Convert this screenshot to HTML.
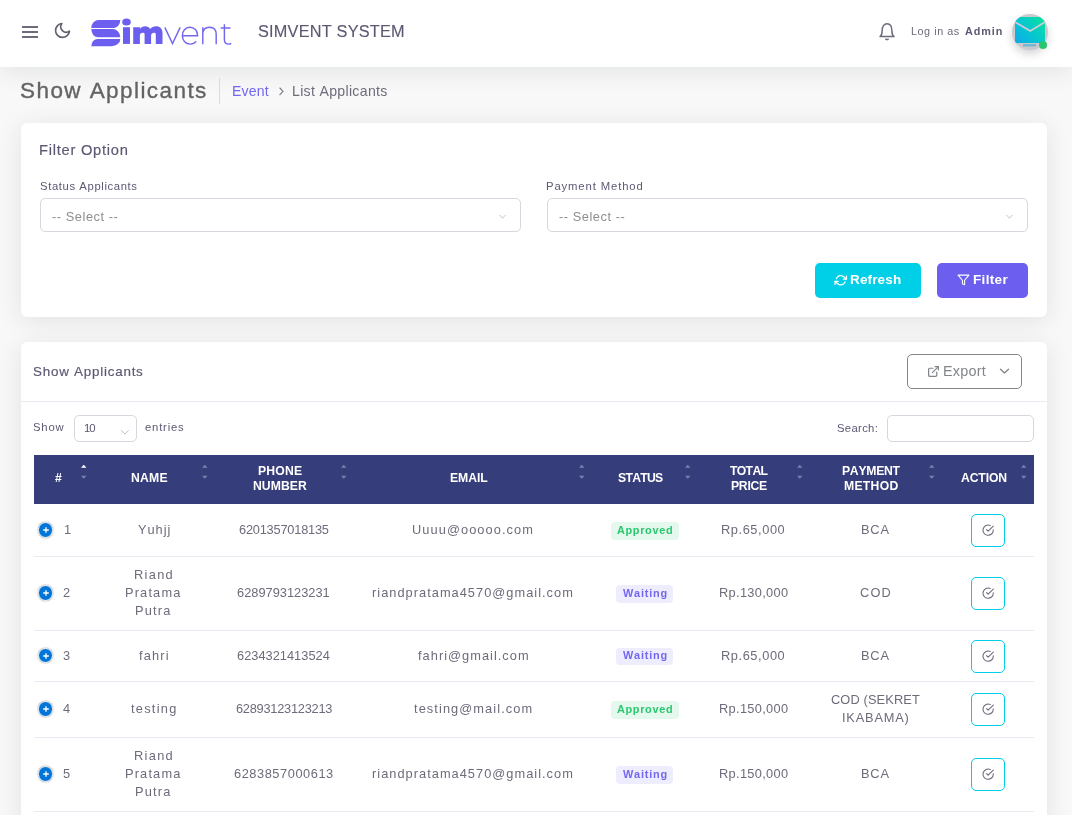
<!DOCTYPE html>
<html><head><meta charset="utf-8"><title>Show Applicants</title>
<style>
html,body{margin:0;padding:0}
body{width:1072px;height:815px;overflow:hidden;position:relative;background:#f8f8f8;font-family:"Liberation Sans",sans-serif;font-kerning:none;font-variant-ligatures:none}
.t{position:absolute;white-space:nowrap;will-change:transform}
.b{position:absolute}
</style></head><body>
<div class="b" style="left:0px;top:0px;width:1072px;height:67px;background:#fff;box-shadow:0 4px 24px 0 rgba(34,41,47,.10)"></div>
<div class="b" style="left:22px;top:26px;width:16px;height:2px;background:#6e6b7b"></div>
<div class="b" style="left:22px;top:31px;width:16px;height:2px;background:#6e6b7b"></div>
<div class="b" style="left:22px;top:36px;width:16px;height:2px;background:#6e6b7b"></div>
<svg class="b" style="left:54px;top:22px" width="17" height="17" viewBox="1 1 22 22"><path d="M21 12.79A9 9 0 1 1 11.21 3 7 7 0 0 0 21 12.79z" fill="none" stroke="#625f6e" stroke-width="2.1" stroke-linecap="round" stroke-linejoin="round"/></svg>
<svg class="b" style="left:88px;top:16px" width="80" height="34" viewBox="0 0 80 34"><g fill="#6c5fef"><path d="M3.3 11.9 A7.5 7.9 0 0 1 10.8 4 L32.3 4 A6.4 7.9 0 0 1 25.9 11.9 Z"/><path d="M3.3 13.1 L24.6 13.1 A7.7 8.2 0 0 1 32.3 21.3 L10 21.3 A6.7 8.2 0 0 1 3.3 13.1 Z"/><path d="M3.3 30.2 A6.3 7.3 0 0 1 9.6 22.9 L32.3 22.9 A8.5 7.3 0 0 1 23.8 30.2 Z"/><ellipse cx="38.5" cy="5.9" rx="4.3" ry="3.5"/><rect x="35" y="11.2" width="7" height="16.7"/><path d="M45.2 27.9 L45.2 11.2 L51.9 11.2 L51.9 13 C53 11 55 10.2 57.2 10.2 C59.6 10.2 61.3 11.3 62.3 13 C63.5 11.2 65.5 10.2 68 10.2 C72 10.2 74.5 12.8 74.5 17 L74.5 27.9 L67.8 27.9 L67.8 18.5 C67.8 17.3 67.3 16.7 66 16.7 C64.5 16.7 63.1 17.5 63.1 19.5 L63.1 27.9 L56.6 27.9 L56.6 18.5 C56.6 17.3 56.1 16.7 54.8 16.7 C53.3 16.7 51.9 17.5 51.9 19.5 L51.9 27.9 Z"/></g></svg>
<svg class="b" style="left:160px;top:18px" width="76" height="30" viewBox="0 0 76 30"><g fill="none" stroke="#6c5fef" stroke-width="1.45" stroke-linejoin="miter" opacity=".95"><path d="M4.8 9.4 L12.5 25.6 L20.2 9.4"/><path d="M22.6 17.8 L37.6 17.8 C37.6 12.6 34.4 9.3 29.9 9.3 C25.3 9.3 22.4 12.9 22.4 17.7 C22.4 22.6 25.6 26.1 30.2 26.1 C32.8 26.1 34.8 25.1 36.2 23.4"/><path d="M42.8 9.2 L42.8 26.2 M42.8 16.5 C42.8 11.8 45.5 9.3 49.5 9.3 C53.5 9.3 56.2 11.6 56.2 16.5 L56.2 26.2"/><path d="M64.4 6.2 L64.4 21.5 C64.4 24.6 66 26.1 68.6 26.1 C69.6 26.1 70.5 25.8 71.2 25.3 M60.7 10 L70.5 10"/></g></svg>
<div class="t" style="left:258.26px;top:21.60px;font-size:16.3px;line-height:18px;font-weight:400;color:#5e5873;letter-spacing:0.213px;-webkit-text-stroke:0.15px currentColor;">SIMVENT SYSTEM</div>
<svg class="b" style="left:876.6px;top:22px" width="20" height="20" viewBox="0 0 20 20"><g fill="none" stroke="#6e6b7b" stroke-width="1.5" stroke-linecap="round" stroke-linejoin="round"><path d="M3 14.6 C4.3 13.8 5.1 12.3 5.1 9 C5.1 4.3 7.2 1.8 10 1.8 C12.8 1.8 14.9 4.3 14.9 9 C14.9 12.3 15.7 13.8 17 14.6 Z"/><path d="M8.8 17.2 Q10 18 11.2 17.2"/></g></svg>
<div class="t" style="left:911.01px;top:24.70px;font-size:10.8px;line-height:12px;font-weight:400;color:#6e6b7b;letter-spacing:0.555px;">Log in as</div>
<div class="t" style="left:964.93px;top:24.70px;font-size:10.8px;line-height:12px;font-weight:700;color:#5e5873;letter-spacing:0.910px;">Admin</div>
<div class="b" style="left:1012px;top:14px;width:36px;height:36px;border-radius:50%;background:#cbc9cf;box-shadow:0 4px 8px rgba(34,41,47,.2);overflow:hidden"><div style="position:absolute;left:3px;top:2.5px;width:30px;height:26px;border-radius:2px;background:linear-gradient(225deg,#0be39a,#06c3d6 60%,#10a9e6)"></div><svg style="position:absolute;left:0;top:0" width="36" height="36"><path d="M3 8 L18.2 17 L33 8" fill="none" stroke="#cfcdd3" stroke-width="1.6"/><rect x="11" y="30.2" width="13" height="2.2" fill="#1aa7d9" opacity=".55"/></svg></div>
<div class="b" style="left:1038.8px;top:40.8px;width:8.5px;height:8.5px;border-radius:50%;background:#28c76f"></div>
<div class="t" style="left:20.48px;top:77.60px;font-size:22.5px;line-height:25px;font-weight:400;color:#636363;letter-spacing:1.428px;-webkit-text-stroke:0.35px currentColor;">Show Applicants</div>
<div class="b" style="left:219px;top:78px;width:1px;height:26px;background:#d6dce1"></div>
<div class="t" style="left:232.24px;top:82.70px;font-size:14.1px;line-height:16px;font-weight:400;color:#7367f0;letter-spacing:0.151px;">Event</div>
<svg class="b" style="left:276px;top:86px" width="10" height="10" viewBox="0 0 10 10"><path d="M3.9 2 L7.1 5.3 L3.9 8.6" fill="none" stroke="#7d7a88" stroke-width="1.15" stroke-linecap="round" stroke-linejoin="round"/></svg>
<div class="t" style="left:291.84px;top:82.70px;font-size:14.1px;line-height:16px;font-weight:400;color:#6e6b7b;letter-spacing:0.318px;">List Applicants</div>
<div class="b" style="left:21px;top:123px;width:1026px;height:194px;background:#fff;border-radius:6px;box-shadow:0 4px 24px 0 rgba(34,41,47,.10)"></div>
<div class="t" style="left:39.39px;top:142.10px;font-size:14.7px;line-height:16px;font-weight:400;color:#5e5873;letter-spacing:0.742px;-webkit-text-stroke:0.18px currentColor;">Filter Option</div>
<div class="t" style="left:39.79px;top:180.00px;font-size:11.3px;line-height:12px;font-weight:400;color:#5e5873;letter-spacing:0.601px;">Status Applicants</div>
<div class="t" style="left:546.37px;top:179.80px;font-size:11.3px;line-height:12px;font-weight:400;color:#5e5873;letter-spacing:0.872px;">Payment Method</div>
<div class="b" style="left:40px;top:198px;width:481px;height:34px;box-sizing:border-box;border:1px solid #d8d6de;border-radius:5px;background:#fff"></div>
<svg class="b" style="left:498px;top:213px" width="10" height="8" viewBox="0 0 10 8"><path d="M1.5 2 L4.5 5.2 L7.5 2" fill="none" stroke="#c4c2ca" stroke-width="1"/></svg>
<div class="b" style="left:547px;top:198px;width:481px;height:34px;box-sizing:border-box;border:1px solid #d8d6de;border-radius:5px;background:#fff"></div>
<svg class="b" style="left:1005px;top:213px" width="10" height="8" viewBox="0 0 10 8"><path d="M1.5 2 L4.5 5.2 L7.5 2" fill="none" stroke="#c4c2ca" stroke-width="1"/></svg>
<div class="t" style="left:52.43px;top:208.80px;font-size:12.8px;line-height:15px;font-weight:400;color:#8e8e8e;letter-spacing:0.555px;">-- Select --</div>
<div class="t" style="left:559.33px;top:208.80px;font-size:12.8px;line-height:15px;font-weight:400;color:#8e8e8e;letter-spacing:0.545px;">-- Select --</div>
<div class="b" style="left:815px;top:263px;width:106px;height:34.5px;background:#00cfe8;border-radius:5px"></div>
<div class="b" style="left:937px;top:263px;width:91px;height:34.5px;background:#6c5fef;border-radius:5px"></div>
<svg class="b" style="left:834px;top:274px" width="13.5" height="12.5" viewBox="0 0 24 24"><g fill="none" stroke="#fff" stroke-width="2.4" stroke-linecap="round" stroke-linejoin="round"><polyline points="23 4 23 10 17 10"/><polyline points="1 20 1 14 7 14"/><path d="M3.51 9a9 9 0 0 1 14.85-3.36L23 10M1 14l4.64 4.36A9 9 0 0 0 20.49 15"/></g></svg>
<svg class="b" style="left:956.8px;top:273.2px" width="13" height="14" viewBox="0 0 24 24"><polygon points="22 3 2 3 10 12.46 10 19 14 21 14 12.46 22 3" fill="none" stroke="#fff" stroke-width="2" stroke-linejoin="round"/></svg>
<div class="t" style="left:850.20px;top:272.00px;font-size:13.5px;line-height:15px;font-weight:700;color:#fff;letter-spacing:0.145px;">Refresh</div>
<div class="t" style="left:972.50px;top:272.00px;font-size:13.5px;line-height:15px;font-weight:700;color:#fff;letter-spacing:0.340px;">Filter</div>
<div class="b" style="left:21px;top:342px;width:1026px;height:600px;background:#fff;border-radius:6px;box-shadow:0 4px 24px 0 rgba(34,41,47,.10)"></div>
<div class="t" style="left:33.19px;top:364.10px;font-size:13.4px;line-height:15px;font-weight:400;color:#5e5873;letter-spacing:0.773px;-webkit-text-stroke:0.18px currentColor;">Show Applicants</div>
<div class="b" style="left:907px;top:354px;width:115px;height:35px;box-sizing:border-box;border:1px solid #82868b;border-radius:5px"></div>
<svg class="b" style="left:927px;top:364.5px" width="13" height="13" viewBox="0 0 24 24"><g fill="none" stroke="#82868b" stroke-width="2.3" stroke-linecap="round" stroke-linejoin="round"><path d="M18 13v6a2 2 0 0 1-2 2H5a2 2 0 0 1-2-2V8a2 2 0 0 1 2-2h6"/><polyline points="15 3 21 3 21 9"/><line x1="10" y1="14" x2="21" y2="3"/></g></svg>
<div class="t" style="left:942.62px;top:362.70px;font-size:14.4px;line-height:16px;font-weight:400;color:#82868b;letter-spacing:0.214px;">Export</div>
<svg class="b" style="left:998px;top:366px" width="13" height="10" viewBox="0 0 13 10"><path d="M2.5 3.3 L6.5 7 L10.5 3.3" fill="none" stroke="#82868b" stroke-width="1.4" stroke-linecap="round" stroke-linejoin="round"/></svg>
<div class="b" style="left:21px;top:401px;width:1026px;height:1px;background:#ebe9f1"></div>
<div class="t" style="left:33.29px;top:421.20px;font-size:11.3px;line-height:12px;font-weight:400;color:#5e5873;letter-spacing:0.806px;">Show</div>
<div class="b" style="left:74px;top:415px;width:63px;height:27px;box-sizing:border-box;border:1px solid #d8d6de;border-radius:5px"></div>
<div class="t" style="left:84.03px;top:421.90px;font-size:11.4px;line-height:12px;font-weight:400;color:#5e5873;letter-spacing:-1.167px;">10</div>
<svg class="b" style="left:120px;top:429px" width="10" height="7" viewBox="0 0 10 7"><path d="M1.3 1.2 L5 5 L8.7 1.2" fill="none" stroke="#c4c2ca" stroke-width="1"/></svg>
<div class="t" style="left:145.42px;top:421.20px;font-size:11.3px;line-height:12px;font-weight:400;color:#5e5873;letter-spacing:0.795px;">entries</div>
<div class="t" style="left:837.09px;top:421.90px;font-size:11.3px;line-height:12px;font-weight:400;color:#5e5873;letter-spacing:0.317px;">Search:</div>
<div class="b" style="left:887px;top:415px;width:146.5px;height:27px;box-sizing:border-box;border:1px solid #d8d6de;border-radius:5px"></div>
<div class="b" style="left:34px;top:455px;width:1000px;height:49px;background:#363d7b"></div>
<div class="t" style="left:54.79px;top:471.30px;font-size:12.2px;line-height:14px;font-weight:700;color:#fff;letter-spacing:0.000px;">#</div>
<div class="t" style="left:130.78px;top:471.30px;font-size:12.2px;line-height:14px;font-weight:700;color:#fff;letter-spacing:0.257px;">NAME</div>
<div class="t" style="left:257.58px;top:464.20px;font-size:12.2px;line-height:14px;font-weight:700;color:#fff;letter-spacing:0.202px;">PHONE</div>
<div class="t" style="left:252.58px;top:479.10px;font-size:12.2px;line-height:14px;font-weight:700;color:#fff;letter-spacing:0.065px;">NUMBER</div>
<div class="t" style="left:449.58px;top:471.30px;font-size:12.2px;line-height:14px;font-weight:700;color:#fff;letter-spacing:-0.065px;">EMAIL</div>
<div class="t" style="left:618.15px;top:471.30px;font-size:12.2px;line-height:14px;font-weight:700;color:#fff;letter-spacing:-0.714px;">STATUS</div>
<div class="t" style="left:729.96px;top:464.20px;font-size:12.2px;line-height:14px;font-weight:700;color:#fff;letter-spacing:-0.661px;">TOTAL</div>
<div class="t" style="left:730.88px;top:479.10px;font-size:12.2px;line-height:14px;font-weight:700;color:#fff;letter-spacing:-0.273px;">PRICE</div>
<div class="t" style="left:841.88px;top:464.20px;font-size:12.2px;line-height:14px;font-weight:700;color:#fff;letter-spacing:-0.267px;">PAYMENT</div>
<div class="t" style="left:844.18px;top:479.10px;font-size:12.2px;line-height:14px;font-weight:700;color:#fff;letter-spacing:0.293px;">METHOD</div>
<div class="t" style="left:960.70px;top:471.30px;font-size:12.2px;line-height:14px;font-weight:700;color:#fff;letter-spacing:-0.127px;">ACTION</div>
<svg class="b" style="left:80.5px;top:464px" width="6" height="16" viewBox="0 0 6 16"><path d="M0 3.7 L2.75 0.7 L5.5 3.7 Z" fill="#ffffff"/><path d="M0 11.7 L2.75 14.7 L5.5 11.7 Z" fill="rgba(255,255,255,.35)"/></svg>
<svg class="b" style="left:202px;top:464px" width="6" height="16" viewBox="0 0 6 16"><path d="M0 3.7 L2.75 0.7 L5.5 3.7 Z" fill="rgba(255,255,255,.35)"/><path d="M0 11.7 L2.75 14.7 L5.5 11.7 Z" fill="rgba(255,255,255,.35)"/></svg>
<svg class="b" style="left:340.6px;top:464px" width="6" height="16" viewBox="0 0 6 16"><path d="M0 3.7 L2.75 0.7 L5.5 3.7 Z" fill="rgba(255,255,255,.35)"/><path d="M0 11.7 L2.75 14.7 L5.5 11.7 Z" fill="rgba(255,255,255,.35)"/></svg>
<svg class="b" style="left:578.8px;top:464px" width="6" height="16" viewBox="0 0 6 16"><path d="M0 3.7 L2.75 0.7 L5.5 3.7 Z" fill="rgba(255,255,255,.35)"/><path d="M0 11.7 L2.75 14.7 L5.5 11.7 Z" fill="rgba(255,255,255,.35)"/></svg>
<svg class="b" style="left:685px;top:464px" width="6" height="16" viewBox="0 0 6 16"><path d="M0 3.7 L2.75 0.7 L5.5 3.7 Z" fill="rgba(255,255,255,.35)"/><path d="M0 11.7 L2.75 14.7 L5.5 11.7 Z" fill="rgba(255,255,255,.35)"/></svg>
<svg class="b" style="left:796.7px;top:464px" width="6" height="16" viewBox="0 0 6 16"><path d="M0 3.7 L2.75 0.7 L5.5 3.7 Z" fill="rgba(255,255,255,.35)"/><path d="M0 11.7 L2.75 14.7 L5.5 11.7 Z" fill="rgba(255,255,255,.35)"/></svg>
<svg class="b" style="left:929px;top:464px" width="6" height="16" viewBox="0 0 6 16"><path d="M0 3.7 L2.75 0.7 L5.5 3.7 Z" fill="rgba(255,255,255,.35)"/><path d="M0 11.7 L2.75 14.7 L5.5 11.7 Z" fill="rgba(255,255,255,.35)"/></svg>
<svg class="b" style="left:1021px;top:464px" width="6" height="16" viewBox="0 0 6 16"><path d="M0 3.7 L2.75 0.7 L5.5 3.7 Z" fill="rgba(255,255,255,.35)"/><path d="M0 11.7 L2.75 14.7 L5.5 11.7 Z" fill="rgba(255,255,255,.35)"/></svg>
<div class="b" style="left:34px;top:556px;width:1000px;height:1px;background:#ebe9f1"></div>
<div class="b" style="left:38.2px;top:522.4px;width:15.2px;height:15.2px;box-sizing:border-box;border-radius:50%;background:#0275d8;border:1.3px solid #fff;box-shadow:0 0 1.5px #777"></div>
<svg class="b" style="left:41px;top:525.0px" width="10" height="10" viewBox="0 0 10 10"><path d="M5 2.2 V7.8 M2.2 5 H7.8" stroke="#fff" stroke-width="1.3"/></svg>
<div class="t" style="left:64.33px;top:522.20px;font-size:12.8px;line-height:15px;font-weight:400;color:#6e6b7b;letter-spacing:0.000px;">1</div>
<div class="t" style="left:137.72px;top:522.20px;font-size:12.8px;line-height:15px;font-weight:400;color:#6e6b7b;letter-spacing:0.970px;">Yuhjj</div>
<div class="t" style="left:238.95px;top:522.20px;font-size:12.8px;line-height:15px;font-weight:400;color:#6e6b7b;letter-spacing:-0.213px;">6201357018135</div>
<div class="t" style="left:412.31px;top:522.20px;font-size:12.8px;line-height:15px;font-weight:400;color:#6e6b7b;letter-spacing:1.077px;">Uuuu@ooooo.com</div>
<div class="b" style="left:611.3px;top:522.0px;width:67.5px;height:18px;background:rgba(40,199,111,.12);border-radius:4px"></div>
<div class="t" style="left:616.93px;top:523.70px;font-size:10.9px;line-height:12px;font-weight:700;color:#28c76f;letter-spacing:0.674px;">Approved</div>
<div class="t" style="left:721.35px;top:522.20px;font-size:12.8px;line-height:15px;font-weight:400;color:#6e6b7b;letter-spacing:0.585px;">Rp.65,000</div>
<div class="t" style="left:861.25px;top:522.20px;font-size:12.8px;line-height:15px;font-weight:400;color:#6e6b7b;letter-spacing:0.828px;">BCA</div>
<div class="b" style="left:971px;top:514.0px;width:34px;height:33px;box-sizing:border-box;border:1px solid #00cfe8;border-radius:5px"></div>
<svg class="b" style="left:982px;top:524.4px" width="12.3" height="12.3" viewBox="0 0 24 24"><g fill="none" stroke="#6e6b7b" stroke-width="2.1" stroke-linecap="round" stroke-linejoin="round"><path d="M22 11.08V12a10 10 0 1 1-5.93-9.14"/><polyline points="22 4 12 14.01 9 11.01"/></g></svg>
<div class="b" style="left:34px;top:630px;width:1000px;height:1px;background:#ebe9f1"></div>
<div class="b" style="left:38.2px;top:585.4px;width:15.2px;height:15.2px;box-sizing:border-box;border-radius:50%;background:#0275d8;border:1.3px solid #fff;box-shadow:0 0 1.5px #777"></div>
<svg class="b" style="left:41px;top:588.0px" width="10" height="10" viewBox="0 0 10 10"><path d="M5 2.2 V7.8 M2.2 5 H7.8" stroke="#fff" stroke-width="1.3"/></svg>
<div class="t" style="left:63.06px;top:585.20px;font-size:12.8px;line-height:15px;font-weight:400;color:#6e6b7b;letter-spacing:0.000px;">2</div>
<div class="t" style="left:133.95px;top:567.20px;font-size:12.8px;line-height:15px;font-weight:400;color:#6e6b7b;letter-spacing:1.308px;">Riand</div>
<div class="t" style="left:125.35px;top:585.20px;font-size:12.8px;line-height:15px;font-weight:400;color:#6e6b7b;letter-spacing:1.162px;">Pratama</div>
<div class="t" style="left:134.95px;top:603.20px;font-size:12.8px;line-height:15px;font-weight:400;color:#6e6b7b;letter-spacing:1.189px;">Putra</div>
<div class="t" style="left:237.35px;top:585.20px;font-size:12.8px;line-height:15px;font-weight:400;color:#6e6b7b;letter-spacing:0.011px;">6289793123231</div>
<div class="t" style="left:372.15px;top:585.20px;font-size:12.8px;line-height:15px;font-weight:400;color:#6e6b7b;letter-spacing:1.027px;">riandpratama4570@gmail.com</div>
<div class="b" style="left:616.2px;top:585.0px;width:56.8px;height:17.5px;background:rgba(115,103,240,.12);border-radius:4px"></div>
<div class="t" style="left:622.99px;top:586.70px;font-size:10.9px;line-height:12px;font-weight:700;color:#7367f0;letter-spacing:0.814px;">Waiting</div>
<div class="t" style="left:718.65px;top:585.20px;font-size:12.8px;line-height:15px;font-weight:400;color:#6e6b7b;letter-spacing:0.329px;">Rp.130,000</div>
<div class="t" style="left:860.05px;top:585.20px;font-size:12.8px;line-height:15px;font-weight:400;color:#6e6b7b;letter-spacing:1.209px;">COD</div>
<div class="b" style="left:971px;top:577.0px;width:34px;height:33px;box-sizing:border-box;border:1px solid #00cfe8;border-radius:5px"></div>
<svg class="b" style="left:982px;top:587.4px" width="12.3" height="12.3" viewBox="0 0 24 24"><g fill="none" stroke="#6e6b7b" stroke-width="2.1" stroke-linecap="round" stroke-linejoin="round"><path d="M22 11.08V12a10 10 0 1 1-5.93-9.14"/><polyline points="22 4 12 14.01 9 11.01"/></g></svg>
<div class="b" style="left:34px;top:681px;width:1000px;height:1px;background:#ebe9f1"></div>
<div class="b" style="left:38.2px;top:647.9px;width:15.2px;height:15.2px;box-sizing:border-box;border-radius:50%;background:#0275d8;border:1.3px solid #fff;box-shadow:0 0 1.5px #777"></div>
<svg class="b" style="left:41px;top:650.5px" width="10" height="10" viewBox="0 0 10 10"><path d="M5 2.2 V7.8 M2.2 5 H7.8" stroke="#fff" stroke-width="1.3"/></svg>
<div class="t" style="left:63.21px;top:647.70px;font-size:12.8px;line-height:15px;font-weight:400;color:#6e6b7b;letter-spacing:0.000px;">3</div>
<div class="t" style="left:138.82px;top:647.70px;font-size:12.8px;line-height:15px;font-weight:400;color:#6e6b7b;letter-spacing:1.161px;">fahri</div>
<div class="t" style="left:237.35px;top:647.70px;font-size:12.8px;line-height:15px;font-weight:400;color:#6e6b7b;letter-spacing:0.023px;">6234321413524</div>
<div class="t" style="left:417.62px;top:647.70px;font-size:12.8px;line-height:15px;font-weight:400;color:#6e6b7b;letter-spacing:1.029px;">fahri@gmail.com</div>
<div class="b" style="left:616.2px;top:647.5px;width:56.8px;height:17.5px;background:rgba(115,103,240,.12);border-radius:4px"></div>
<div class="t" style="left:622.99px;top:649.20px;font-size:10.9px;line-height:12px;font-weight:700;color:#7367f0;letter-spacing:0.814px;">Waiting</div>
<div class="t" style="left:721.35px;top:647.70px;font-size:12.8px;line-height:15px;font-weight:400;color:#6e6b7b;letter-spacing:0.585px;">Rp.65,000</div>
<div class="t" style="left:861.25px;top:647.70px;font-size:12.8px;line-height:15px;font-weight:400;color:#6e6b7b;letter-spacing:0.828px;">BCA</div>
<div class="b" style="left:971px;top:639.5px;width:34px;height:33px;box-sizing:border-box;border:1px solid #00cfe8;border-radius:5px"></div>
<svg class="b" style="left:982px;top:649.9px" width="12.3" height="12.3" viewBox="0 0 24 24"><g fill="none" stroke="#6e6b7b" stroke-width="2.1" stroke-linecap="round" stroke-linejoin="round"><path d="M22 11.08V12a10 10 0 1 1-5.93-9.14"/><polyline points="22 4 12 14.01 9 11.01"/></g></svg>
<div class="b" style="left:34px;top:737px;width:1000px;height:1px;background:#ebe9f1"></div>
<div class="b" style="left:38.2px;top:701.4px;width:15.2px;height:15.2px;box-sizing:border-box;border-radius:50%;background:#0275d8;border:1.3px solid #fff;box-shadow:0 0 1.5px #777"></div>
<svg class="b" style="left:41px;top:704.0px" width="10" height="10" viewBox="0 0 10 10"><path d="M5 2.2 V7.8 M2.2 5 H7.8" stroke="#fff" stroke-width="1.3"/></svg>
<div class="t" style="left:63.41px;top:701.20px;font-size:12.8px;line-height:15px;font-weight:400;color:#6e6b7b;letter-spacing:0.000px;">4</div>
<div class="t" style="left:131.01px;top:701.20px;font-size:12.8px;line-height:15px;font-weight:400;color:#6e6b7b;letter-spacing:1.268px;">testing</div>
<div class="t" style="left:235.75px;top:701.20px;font-size:12.8px;line-height:15px;font-weight:400;color:#6e6b7b;letter-spacing:-0.250px;">62893123123213</div>
<div class="t" style="left:414.01px;top:701.20px;font-size:12.8px;line-height:15px;font-weight:400;color:#6e6b7b;letter-spacing:1.082px;">testing@mail.com</div>
<div class="b" style="left:611.3px;top:701.0px;width:67.5px;height:18px;background:rgba(40,199,111,.12);border-radius:4px"></div>
<div class="t" style="left:616.93px;top:702.70px;font-size:10.9px;line-height:12px;font-weight:700;color:#28c76f;letter-spacing:0.674px;">Approved</div>
<div class="t" style="left:718.65px;top:701.20px;font-size:12.8px;line-height:15px;font-weight:400;color:#6e6b7b;letter-spacing:0.329px;">Rp.150,000</div>
<div class="t" style="left:830.95px;top:692.20px;font-size:12.8px;line-height:15px;font-weight:400;color:#6e6b7b;letter-spacing:0.127px;">COD (SEKRET</div>
<div class="t" style="left:842.12px;top:710.20px;font-size:12.8px;line-height:15px;font-weight:400;color:#6e6b7b;letter-spacing:0.815px;">IKABAMA)</div>
<div class="b" style="left:971px;top:693.0px;width:34px;height:33px;box-sizing:border-box;border:1px solid #00cfe8;border-radius:5px"></div>
<svg class="b" style="left:982px;top:703.4px" width="12.3" height="12.3" viewBox="0 0 24 24"><g fill="none" stroke="#6e6b7b" stroke-width="2.1" stroke-linecap="round" stroke-linejoin="round"><path d="M22 11.08V12a10 10 0 1 1-5.93-9.14"/><polyline points="22 4 12 14.01 9 11.01"/></g></svg>
<div class="b" style="left:34px;top:811px;width:1000px;height:1px;background:#ebe9f1"></div>
<div class="b" style="left:38.2px;top:766.4px;width:15.2px;height:15.2px;box-sizing:border-box;border-radius:50%;background:#0275d8;border:1.3px solid #fff;box-shadow:0 0 1.5px #777"></div>
<svg class="b" style="left:41px;top:769.0px" width="10" height="10" viewBox="0 0 10 10"><path d="M5 2.2 V7.8 M2.2 5 H7.8" stroke="#fff" stroke-width="1.3"/></svg>
<div class="t" style="left:63.19px;top:766.20px;font-size:12.8px;line-height:15px;font-weight:400;color:#6e6b7b;letter-spacing:0.000px;">5</div>
<div class="t" style="left:133.95px;top:748.20px;font-size:12.8px;line-height:15px;font-weight:400;color:#6e6b7b;letter-spacing:1.308px;">Riand</div>
<div class="t" style="left:125.35px;top:766.20px;font-size:12.8px;line-height:15px;font-weight:400;color:#6e6b7b;letter-spacing:1.162px;">Pratama</div>
<div class="t" style="left:134.95px;top:784.20px;font-size:12.8px;line-height:15px;font-weight:400;color:#6e6b7b;letter-spacing:1.189px;">Putra</div>
<div class="t" style="left:234.35px;top:766.20px;font-size:12.8px;line-height:15px;font-weight:400;color:#6e6b7b;letter-spacing:0.556px;">6283857000613</div>
<div class="t" style="left:372.15px;top:766.20px;font-size:12.8px;line-height:15px;font-weight:400;color:#6e6b7b;letter-spacing:1.027px;">riandpratama4570@gmail.com</div>
<div class="b" style="left:616.2px;top:766.0px;width:56.8px;height:17.5px;background:rgba(115,103,240,.12);border-radius:4px"></div>
<div class="t" style="left:622.99px;top:767.70px;font-size:10.9px;line-height:12px;font-weight:700;color:#7367f0;letter-spacing:0.814px;">Waiting</div>
<div class="t" style="left:718.65px;top:766.20px;font-size:12.8px;line-height:15px;font-weight:400;color:#6e6b7b;letter-spacing:0.329px;">Rp.150,000</div>
<div class="t" style="left:861.25px;top:766.20px;font-size:12.8px;line-height:15px;font-weight:400;color:#6e6b7b;letter-spacing:0.828px;">BCA</div>
<div class="b" style="left:971px;top:758.0px;width:34px;height:33px;box-sizing:border-box;border:1px solid #00cfe8;border-radius:5px"></div>
<svg class="b" style="left:982px;top:768.4px" width="12.3" height="12.3" viewBox="0 0 24 24"><g fill="none" stroke="#6e6b7b" stroke-width="2.1" stroke-linecap="round" stroke-linejoin="round"><path d="M22 11.08V12a10 10 0 1 1-5.93-9.14"/><polyline points="22 4 12 14.01 9 11.01"/></g></svg>
</body></html>
